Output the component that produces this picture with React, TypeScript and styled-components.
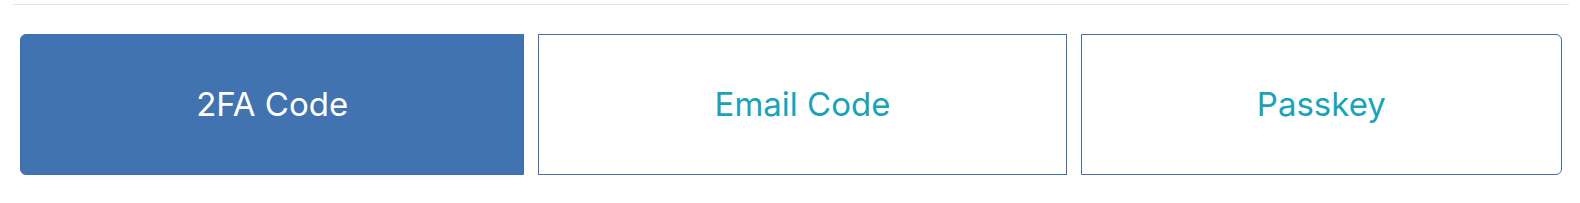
import React, { useState } from 'react';
import styled, { createGlobalStyle } from 'styled-components';

const GlobalStyle = createGlobalStyle`
  body {
    margin: 0;
    background: #fff;
    font-family: Inter, Roboto, "Liberation Sans", sans-serif;
  }
`;

const Wrapper = styled.div`
  padding: 4px 11px 0 13px;
`;

const Divider = styled.hr`
  margin: 0;
  border: 0;
  border-top: 1px solid #e2e4e8;
`;

const Group = styled.div`
  display: flex;
  gap: 14px;
  margin: 29px 7px 0;
`;

const Option = styled.button<{ $active: boolean }>`
  flex: 1 1 auto;
  height: 141px;
  padding: 0 12px 2px;
  font-family: Inter, Roboto, "Liberation Sans", sans-serif;
  font-size: 33px;
  border: 1px solid #3f6fae;
  border-radius: 0;
  background: ${p => (p.$active ? '#4173b0' : '#fff')};
  color: ${p => (p.$active ? '#fff' : '#19a3b8')};
  cursor: pointer;

  &:first-child {
    border-radius: 6px 0 0 6px;
  }
  &:last-child {
    border-radius: 0 6px 6px 0;
  }
`;

const options = ['2FA Code', 'Email Code', 'Passkey'];

export default function App() {
  const [selected, setSelected] = useState(0);
  return (
    <Wrapper>
      <GlobalStyle />
      <Divider />
      <Group>
        {options.map((label, i) => (
          <Option key={label} $active={selected === i} onClick={() => setSelected(i)}>
            {label}
          </Option>
        ))}
      </Group>
    </Wrapper>
  );
}
